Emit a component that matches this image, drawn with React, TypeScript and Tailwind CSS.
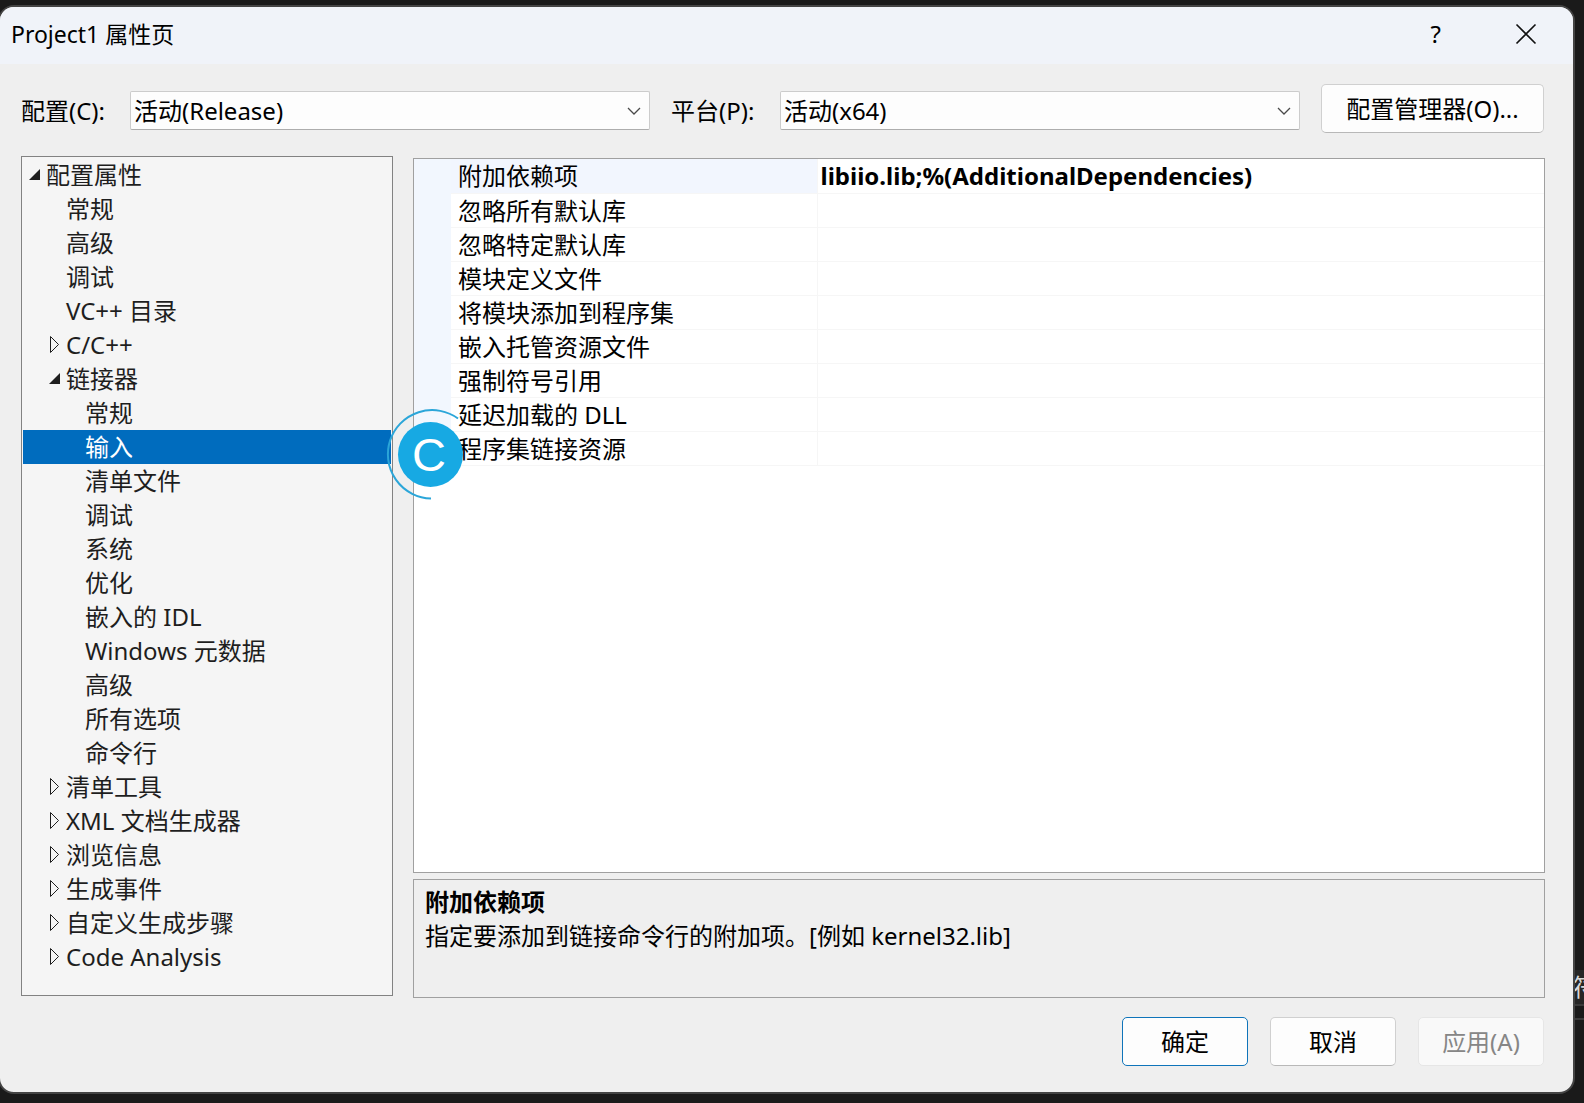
import { useState } from "react";

type Arrow = "open" | "closed" | null;
type Node = { label: string; level: 0 | 1 | 2; arrow: Arrow };

const nodes: Node[] = [
  { label: "配置属性", level: 0, arrow: "open" },
  { label: "常规", level: 1, arrow: null },
  { label: "高级", level: 1, arrow: null },
  { label: "调试", level: 1, arrow: null },
  { label: "VC++ 目录", level: 1, arrow: null },
  { label: "C/C++", level: 1, arrow: "closed" },
  { label: "链接器", level: 1, arrow: "open" },
  { label: "常规", level: 2, arrow: null },
  { label: "输入", level: 2, arrow: null },
  { label: "清单文件", level: 2, arrow: null },
  { label: "调试", level: 2, arrow: null },
  { label: "系统", level: 2, arrow: null },
  { label: "优化", level: 2, arrow: null },
  { label: "嵌入的 IDL", level: 2, arrow: null },
  { label: "Windows 元数据", level: 2, arrow: null },
  { label: "高级", level: 2, arrow: null },
  { label: "所有选项", level: 2, arrow: null },
  { label: "命令行", level: 2, arrow: null },
  { label: "清单工具", level: 1, arrow: "closed" },
  { label: "XML 文档生成器", level: 1, arrow: "closed" },
  { label: "浏览信息", level: 1, arrow: "closed" },
  { label: "生成事件", level: 1, arrow: "closed" },
  { label: "自定义生成步骤", level: 1, arrow: "closed" },
  { label: "Code Analysis", level: 1, arrow: "closed" },
];

const properties = [
  { name: "附加依赖项", value: "libiio.lib;%(AdditionalDependencies)" },
  { name: "忽略所有默认库", value: "" },
  { name: "忽略特定默认库", value: "" },
  { name: "模块定义文件", value: "" },
  { name: "将模块添加到程序集", value: "" },
  { name: "嵌入托管资源文件", value: "" },
  { name: "强制符号引用", value: "" },
  { name: "延迟加载的 DLL", value: "" },
  { name: "程序集链接资源", value: "" },
];

const indent = { 0: "pl-[3px]", 1: "pl-[23px]", 2: "pl-[42px]" };

function TreeArrow({ arrow }: { arrow: Arrow }) {
  return (
    <svg className="h-5 w-5 shrink-0" viewBox="0 0 20 20" aria-hidden="true">
      {arrow === "open" && <path d="M14 4V15H3Z" fill="#1e1e1e" />}
      {arrow === "closed" && (
        <path d="M4.5 1.5V17.5L12.5 9.5Z" fill="none" stroke="#1e1e1e" strokeWidth="1" />
      )}
    </svg>
  );
}

function Combo({ id, label, value }: { id: string; label: string; value: string }) {
  return (
    <div className="flex min-w-0 flex-1 items-center">
      <label htmlFor={id} className="w-[109px] shrink-0 whitespace-nowrap">
        {label}
      </label>
      <div className="relative min-w-0 flex-1">
        <select
          id={id}
          className="block h-[39px] w-full appearance-none rounded-[2px] border border-[#cccccc] border-b-[#adadad] bg-[#fdfdfd] pr-9 pl-[3px] text-black"
        >
          <option>{value}</option>
        </select>
        <svg
          className="pointer-events-none absolute top-3 right-2 h-4 w-4"
          viewBox="0 0 16 16"
          fill="none"
          stroke="#4a4a4a"
          strokeWidth="1.3"
          aria-hidden="true"
        >
          <path d="M2 5l6 6 6-6" />
        </svg>
      </div>
    </div>
  );
}

function Badge() {
  return (
    <svg
      className="pointer-events-none absolute top-[399px] left-[385px] h-24 w-24"
      viewBox="0 0 96 96"
      aria-hidden="true"
    >
      <path d="M73 12.5A44.200 44.200 0 1 0 46 92.5" fill="none" stroke="#2ba6d9" strokeWidth="2" />
      <circle cx="45.500" cy="48.500" r="32.500" fill="#17a9e3" />
      <text x="44" y="65" textAnchor="middle" fontFamily="Liberation Sans" fontSize="47" fill="#ffffff">
        C
      </text>
    </svg>
  );
}

export default function App() {
  const [selected, setSelected] = useState(8);
  return (
    <div className="flex min-h-screen overflow-hidden bg-[#1a1a1a] pt-[5px] pb-[9px] font-['Noto_Sans','Noto_Sans_CJK_SC',sans-serif] text-2xl leading-8 text-black">
      <div className="relative -ml-0.5 flex min-w-0 flex-1 flex-col overflow-hidden rounded-[16px] border-2 border-[#444444] bg-[#efefef]">
        <header className="flex h-[57px] shrink-0 items-center justify-between bg-[#f0f3f9] pr-[35px] pb-[3px] pl-[11px]">
          <h1 className="text-[23px]">Project1 属性页</h1>
          <div className="flex items-center gap-[69px]">
            <button aria-label="帮助" className="px-1">
              ?
            </button>
            <button aria-label="关闭">
              <svg className="h-6 w-6" viewBox="0 0 24 24" stroke="#111111" strokeWidth="1.6" aria-hidden="true">
                <path d="M2.500 2.500l19 19M21.500 2.500l-19 19" />
              </svg>
            </button>
          </div>
        </header>

        <div className="flex shrink-0 items-start gap-[21px] pt-5 pr-[29px] pl-[21px]">
          <div className="flex min-w-0 flex-1 gap-[21px] pt-[7px]">
            <Combo id="config" label="配置(C):" value="活动(Release)" />
            <Combo id="platform" label="平台(P):" value="活动(x64)" />
          </div>
          <button className="h-[49px] w-[223px] shrink-0 rounded-[5px] border border-[#d0d0d0] border-b-[#b8b8b8] bg-[#fdfdfd]">
            配置管理器(O)...
          </button>
        </div>

        <main className="flex min-h-0 flex-1 gap-5 pt-[23px] pr-[28px] pl-[21px]">
          <ul
            role="tree"
            aria-label="配置属性"
            className="mb-0.5 w-[372px] shrink-0 border border-[#828282] bg-[#f5f5f5] p-px text-[#1e1e1e]"
          >
            {nodes.map((n, i) => (
              <li key={i} role="treeitem" aria-level={n.level + 1} aria-selected={i === selected}>
                <button
                  onClick={() => setSelected(i)}
                  className={`flex h-[34px] w-full items-center whitespace-nowrap ${indent[n.level]} ${
                    i === selected ? "bg-[#006cbe] text-white" : ""
                  }`}
                >
                  <TreeArrow arrow={n.arrow} />
                  {n.label}
                </button>
              </li>
            ))}
          </ul>

          <div className="flex min-w-0 flex-1 flex-col gap-1.5 pt-0.5">
            <div className="flex-1 border border-[#a0a0a0] bg-white">
              <table className="w-full table-fixed border-collapse text-left">
                <colgroup>
                  <col className="w-[37px]" />
                  <col className="w-[366px]" />
                  <col />
                </colgroup>
                <tbody>
                  {properties.map((p, i) => (
                    <tr key={p.name} className="h-[34px]">
                      <td className="bg-[#f2f7fe] p-0" />
                      <th
                        scope="row"
                        className={`border-r border-b border-[#f6f6f6] pt-px pr-0 pb-0 pl-[7px] font-normal ${
                          i === 0 ? "bg-[#f2f6fe]" : ""
                        }`}
                      >
                        {p.name}
                      </th>
                      <td className="border-b border-[#f6f6f6] pt-px pr-0 pb-0 pl-[3px] font-bold">{p.value}</td>
                    </tr>
                  ))}
                </tbody>
              </table>
            </div>
            <section className="h-[119px] shrink-0 border border-[#a0a0a0] px-[11px] pt-[5px]">
              <h2 className="leading-[34px] font-bold">附加依赖项</h2>
              <p className="leading-[34px]">指定要添加到链接命令行的附加项。[例如 kernel32.lib]</p>
            </section>
          </div>
        </main>

        <footer className="flex shrink-0 justify-end gap-[22px] pt-[19px] pr-[29px] pb-[26px]">
          <button className="h-[49px] w-[126px] rounded-[5px] border border-[#0f74ba] bg-[#fdfdfd]">确定</button>
          <button className="h-[49px] w-[126px] rounded-[5px] border border-[#d0d0d0] border-b-[#b8b8b8] bg-[#fdfdfd]">
            取消
          </button>
          <button disabled className="h-[49px] w-[126px] rounded-[5px] border border-[#e6e6e6] bg-[#f9f9f9] text-[#868686]">
            应用(A)
          </button>
        </footer>
        <Badge />
      </div>

      <aside className="-mb-[9px] flex w-[9px] shrink-0 flex-col justify-end overflow-hidden pb-[83px]">
        <div className="flex h-[36px] items-center justify-end border-b-2 border-[#3a3a3a] bg-[#262626] whitespace-nowrap text-[#d8d8d8]">
          <span className="-mr-[13px]">字符</span>
        </div>
        <div className="h-[14px] border-b-2 border-[#3a3a3a]" />
      </aside>
    </div>
  );
}
